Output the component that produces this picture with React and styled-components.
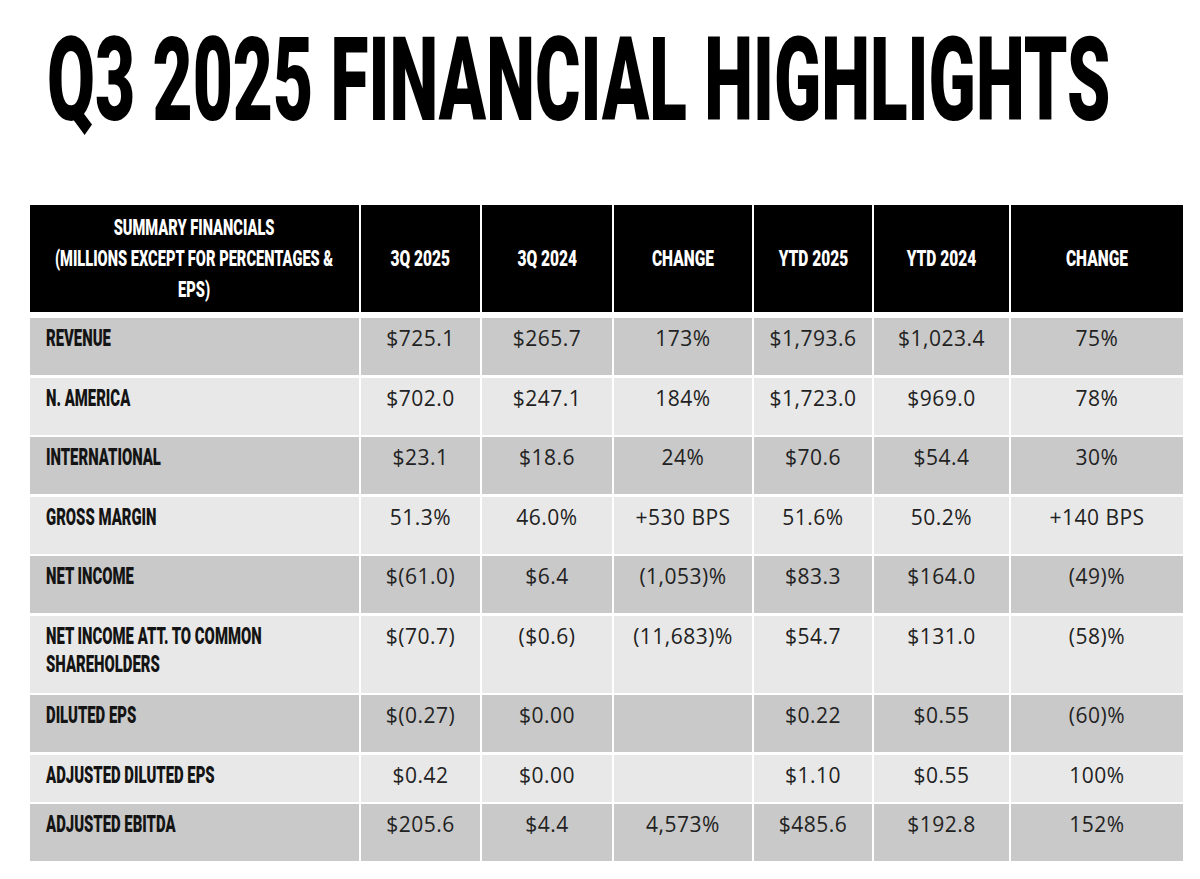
import React, { useLayoutEffect, useRef, useState } from 'react';
import styled, { createGlobalStyle } from 'styled-components';

const GlobalStyle = createGlobalStyle`
  html, body {
    margin: 0;
    padding: 0;
    background: #ffffff;
  }
  body {
    font-family: 'Open Sans', 'Liberation Sans', sans-serif;
  }
`;

const COLS = '329px 119px 130px 138px 118px 135px 172px';
const DARK = '#c9c9c9';
const LIGHT = '#e8e8e8';

const Page = styled.div`
  min-height: 879px;
  padding-top: 23px;
  box-sizing: border-box;
`;

const Title = styled.h1`
  margin: 0 0 65px 47px;
  height: 117px;
  font-family: Roboto, 'Liberation Sans', sans-serif;
  font-weight: 900;
  font-size: 60px;
  line-height: 60px;
  color: #000;
  white-space: nowrap;
`;

const TitleText = styled.span`
  display: inline-block;
  transform-origin: left top;
`;

const Table = styled.div`
  margin-left: 30px;
  width: 1153px;
  display: flex;
  flex-direction: column;
  gap: 2.5px;
`;

const HeadRow = styled.div`
  display: grid;
  grid-template-columns: ${COLS};
  column-gap: 2px;
  height: 107px;
  margin-bottom: 3.5px;
`;

const HeadCell = styled.div`
  background: #000;
  color: #fff;
  display: flex;
  align-items: center;
  justify-content: center;
  font-family: Roboto, 'Liberation Sans', sans-serif;
  font-weight: 900;
  font-size: 22.5px;
  line-height: 31px;
  text-align: center;
  white-space: nowrap;
`;

const Squeeze = styled.span`
  display: inline-block;
  flex-shrink: 0;
  transform: scaleX(${p => p.$sx});
  transform-origin: ${p => p.$origin || 'center'};
`;

const Row = styled.div`
  display: grid;
  grid-template-columns: ${COLS};
  column-gap: 2px;
  height: ${p => p.$h}px;
`;

const LabelCell = styled.div`
  background: ${p => p.$shade};
  padding: 6px 0 0 16px;
  font-family: Roboto, 'Liberation Sans', sans-serif;
  font-weight: 900;
  font-size: 24px;
  line-height: 28px;
  color: #141414;
  white-space: nowrap;
`;

const ValueCell = styled.div`
  background: ${p => p.$shade};
  padding-top: 6px;
  text-align: center;
  font-family: 'Open Sans', 'Liberation Sans', sans-serif;
  font-size: 21px;
  line-height: 28px;
  letter-spacing: 0.5px;
  color: #222;
  white-space: nowrap;
`;

const headers = ['3Q 2025', '3Q 2024', 'CHANGE', 'YTD 2025', 'YTD 2024', 'CHANGE'];

const rows = [
  { label: ['REVENUE'], h: 57, values: ['$725.1', '$265.7', '173%', '$1,793.6', '$1,023.4', '75%'] },
  { label: ['N. AMERICA'], h: 57, values: ['$702.0', '$247.1', '184%', '$1,723.0', '$969.0', '78%'] },
  { label: ['INTERNATIONAL'], h: 57, values: ['$23.1', '$18.6', '24%', '$70.6', '$54.4', '30%'] },
  { label: ['GROSS MARGIN'], h: 57, values: ['51.3%', '46.0%', '+530 BPS', '51.6%', '50.2%', '+140 BPS'] },
  { label: ['NET INCOME'], h: 57, values: ['$(61.0)', '$6.4', '(1,053)%', '$83.3', '$164.0', '(49)%'] },
  {
    label: ['NET INCOME ATT. TO COMMON', 'SHAREHOLDERS'],
    h: 77,
    values: ['$(70.7)', '($0.6)', '(11,683)%', '$54.7', '$131.0', '(58)%'],
  },
  { label: ['DILUTED EPS'], h: 57, values: ['$(0.27)', '$0.00', '', '$0.22', '$0.55', '(60)%'] },
  { label: ['ADJUSTED DILUTED EPS'], h: 47, values: ['$0.42', '$0.00', '', '$1.10', '$0.55', '100%'] },
  { label: ['ADJUSTED EBITDA'], h: 57, values: ['$205.6', '$4.4', '4,573%', '$485.6', '$192.8', '152%'] },
];

const TITLE_WIDTH = 1063;
const TITLE_STRETCH = 83 / (0.711 * 60); // cap height wanted / cap height at 60px

const PageTitle = ({ children }) => {
  const ref = useRef(null);
  const [sx, setSx] = useState(1);

  useLayoutEffect(() => {
    if (ref.current) {
      const natural = ref.current.offsetWidth;
      if (natural > 0) setSx(TITLE_WIDTH / natural);
    }
  }, []);

  return (
    <Title>
      <TitleText ref={ref} style={{ transform: `scale(${sx}, ${TITLE_STRETCH})` }}>
        {children}
      </TitleText>
    </Title>
  );
};

const App = () => {
  return (
    <Page>
      <GlobalStyle />
      <PageTitle>Q3 2025 FINANCIAL HIGHLIGHTS</PageTitle>

      <Table>
        <HeadRow>
          <HeadCell>
            <Squeeze $sx={0.65}>
              SUMMARY FINANCIALS
              <br />
              (MILLIONS EXCEPT FOR PERCENTAGES &amp;
              <br />
              EPS)
            </Squeeze>
          </HeadCell>
          {headers.map((h, i) => (
            <HeadCell key={i}>
              <Squeeze $sx={0.69}>{h}</Squeeze>
            </HeadCell>
          ))}
        </HeadRow>

        {rows.map((row, i) => {
          const shade = i % 2 === 0 ? DARK : LIGHT;
          return (
            <Row key={i} $h={row.h}>
              <LabelCell $shade={shade}>
                <Squeeze $sx={0.62} $origin="left">
                  {row.label.map((line, j) => (
                    <React.Fragment key={j}>
                      {j > 0 && <br />}
                      {line}
                    </React.Fragment>
                  ))}
                </Squeeze>
              </LabelCell>
              {row.values.map((v, j) => (
                <ValueCell key={j} $shade={shade}>
                  {v}
                </ValueCell>
              ))}
            </Row>
          );
        })}
      </Table>
    </Page>
  );
};

export default App;
